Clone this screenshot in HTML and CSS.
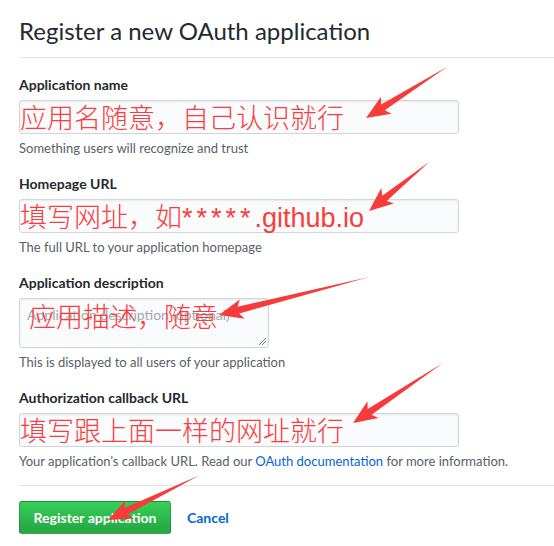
FILE: index.html
```html
<!DOCTYPE html>
<html lang="en">
<head>
<meta charset="utf-8">
<title>Register a new OAuth application</title>
<link rel="stylesheet" href="styles.css">
</head>
<body>
<div class="page">
  <div class="subhead">
    <h2 class="subhead-title">Register a new OAuth application</h2>
  </div>
  <form class="form">
    <div class="form-group">
      <label class="label">Application name</label>
      <div class="input"><span class="red">应用名随意，自己认识就行</span></div>
      <p class="note">Something users will recognize and trust</p>
    </div>
    <div class="form-group">
      <label class="label">Homepage URL</label>
      <div class="input"><span class="red">填写网址，如<span class="stars">*****</span>.github.io</span></div>
      <p class="note">The full URL to your application homepage</p>
    </div>
    <div class="form-group">
      <label class="label">Application description</label>
      <div class="textarea">
        <span class="placeholder">Application description (optional)</span>
        <span class="red red-over">应用描述，随意</span>
        <svg class="grip" width="10" height="10" viewBox="0 0 10 10"><path d="M9 2 L2 9 M9 5 L5 9" stroke="#6a737d" stroke-width="1" fill="none"/></svg>
      </div>
      <p class="note">This is displayed to all users of your application</p>
    </div>
    <div class="form-group">
      <label class="label">Authorization callback URL</label>
      <div class="input"><span class="red">填写跟上面一样的网址就行</span></div>
      <p class="note">Your application’s callback URL. Read our <a class="link" href="#">OAuth documentation</a> for more information.</p>
    </div>
    <div class="form-actions">
      <button class="btn-primary" type="button">Register application</button>
      <a class="cancel" href="#">Cancel</a>
    </div>
  </form>
</div>
<svg class="arrows" width="554" height="546" viewBox="0 0 554 546">
  <g fill="#f73a3a">
    <polygon transform="translate(366,118) rotate(-32.2)" points="0,0 24,-10 20,-3.5 96,0 20,3.5 24,10"/>
    <polygon transform="translate(369,211) rotate(-39.2)" points="0,0 24,-10 20,-3.5 78,0 20,3.5 24,10"/>
    <polygon transform="translate(219,315) rotate(-14.2)" points="0,0 24,-10 20,-3.5 155,0 20,3.5 24,10"/>
    <polygon transform="translate(353,423) rotate(-33.7)" points="0,0 24,-10 20,-3.5 108,0 20,3.5 24,10"/>
    <polygon transform="translate(108,520) rotate(-26.1)" points="0,0 24,-10 20,-3.5 102,0 20,3.5 24,10"/>
  </g>
</svg>
</body>
</html>
```
FILE: styles.css
```css
html, body {
  margin: 0;
  padding: 0;
  background: #ffffff;
  overflow: hidden;
}
body {
  font-family: Lato, "Noto Sans", sans-serif;
  color: #24292e;
  position: relative;
  width: 554px;
  height: 546px;
}
.page {
  padding-left: 19px;
  width: 640px;
}
.subhead {
  border-bottom: 1px solid #e1e4e8;
  padding-top: 16px;
  padding-bottom: 11px;
}
.subhead-title {
  margin: 0;
  font-size: 24px;
  font-weight: 400;
  line-height: 30px;
}
.form {
  margin: 0;
}
.form-group {
  margin-top: 16px;
}
.label {
  display: block;
  font-size: 14px;
  font-weight: 700;
  line-height: 21px;
  margin-bottom: 5px;
}
.input,
.textarea {
  box-sizing: border-box;
  border: 1px solid #d1d5da;
  border-radius: 3px;
  background: #fafbfc;
  box-shadow: inset 0 1px 2px rgba(27, 31, 35, 0.075);
}
.input {
  width: 440px;
  height: 34px;
  overflow: visible;
}
.textarea {
  width: 250px;
  height: 50px;
  position: relative;
}
.red {
  display: block;
  font-family: "Liberation Sans", "Noto Sans CJK SC", sans-serif;
  font-size: 27px;
  font-weight: 300;
  line-height: 36px;
  height: 32px;
  color: #fb3c3c;
  white-space: nowrap;
}
.stars {
  letter-spacing: 4px;
}
.placeholder {
  position: absolute;
  left: 7px;
  top: 6px;
  font-size: 14px;
  line-height: 20px;
  color: #a3a8ad;
  white-space: nowrap;
}
.red-over {
  position: absolute;
  left: 9px;
  top: 1px;
}
.grip {
  position: absolute;
  right: 1px;
  bottom: 1px;
}
.note {
  margin: 5px 0 0;
  font-size: 13px;
  line-height: 18px;
  color: #586069;
}
.link {
  color: #0366d6;
  text-decoration: none;
}
.form-actions {
  margin-top: 15px;
  border-top: 1px solid #e1e4e8;
  padding-top: 15px;
  display: flex;
  align-items: center;
  gap: 16px;
}
.btn-primary {
  box-sizing: border-box;
  width: 152px;
  height: 33px;
  padding: 0;
  font-family: Lato, "Noto Sans", sans-serif;
  font-size: 14px;
  font-weight: 700;
  color: #ffffff;
  background: linear-gradient(#34d058, #28a745 90%);
  border: 1px solid rgba(27, 31, 35, 0.2);
  border-radius: 3px;
}
.cancel {
  font-size: 14px;
  font-weight: 700;
  color: #0366d6;
  text-decoration: none;
}
.arrows {
  position: absolute;
  left: 0;
  top: 0;
  pointer-events: none;
}
```
